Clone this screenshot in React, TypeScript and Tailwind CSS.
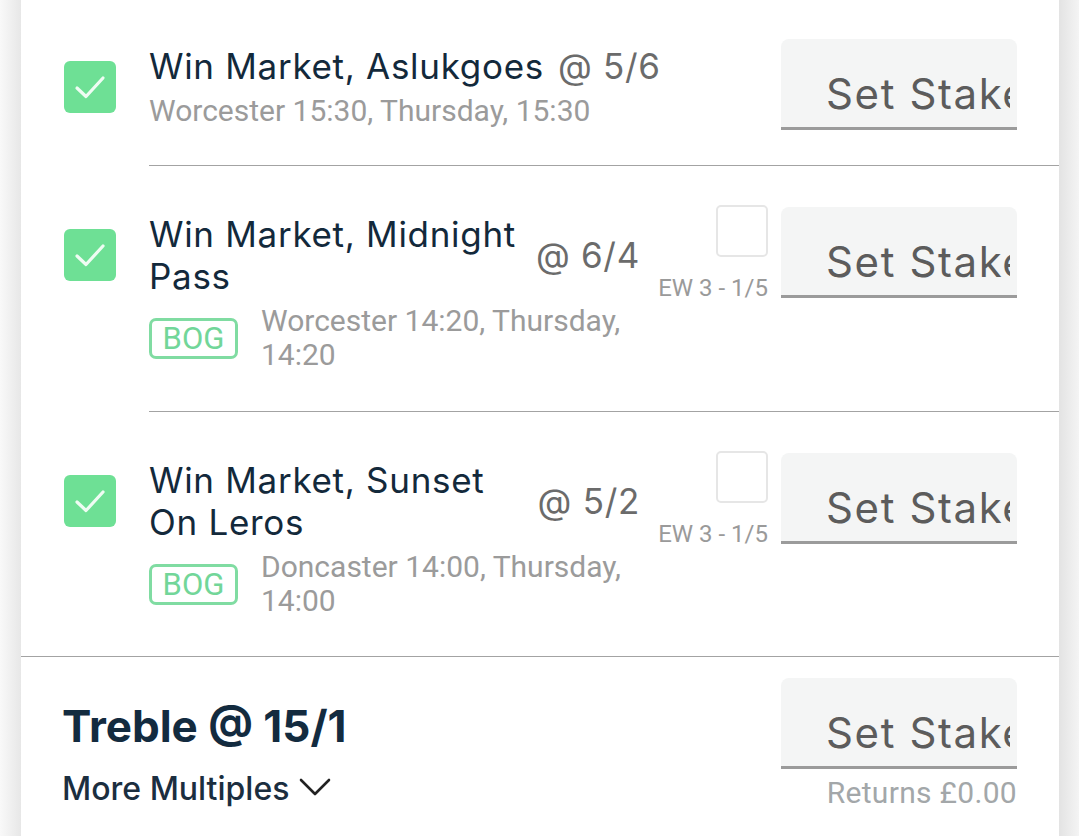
import React from "react";

const TITLE_FONT = "font-['Inter',sans-serif]";
const SUB_FONT = "font-['Roboto',sans-serif]";

function GreenCheck() {
  return (
    <div className="flex h-[52px] w-[52px] items-center justify-center rounded-[6px] bg-[#6ee095]">
      <svg width="36" height="36" viewBox="0 0 36 36" fill="none">
        <path d="M5 19 L14 27.5 L31 9" stroke="#effcf3" strokeWidth="3.2" strokeLinecap="round" strokeLinejoin="round" />
      </svg>
    </div>
  );
}

function SetStake() {
  return (
    <div className="h-[91px] w-[236px] shrink-0 rounded-t-[8px] border-b-[3px] border-[#9b9b9b] bg-[#f4f5f5] pl-[45px] pr-[7px] pt-[31px]">
      <div className={`overflow-hidden whitespace-nowrap text-[42px] leading-[48px] tracking-[1.6px] text-[#5c5c5c] ${TITLE_FONT}`}>Set Stake</div>
    </div>
  );
}

function EW() {
  return (
    <div className="ml-[15px] mt-[-2px] flex w-[113px] shrink-0 flex-col items-end">
      <div className="h-[52px] w-[52px] rounded-[5px] border-2 border-[#e6e6e6] bg-white" />
      <div className={`mt-[17px] whitespace-nowrap text-[24px] leading-[28px] text-[#9a9a9a] ${SUB_FONT}`}>EW 3 - 1/5</div>
    </div>
  );
}

type Row = {
  title: string;
  odds: string;
  sub: string;
  bog?: boolean;
  ew?: boolean;
};

function BetRow({ row, pt, pb, checkTop, last }: { row: Row; pt: string; pb: string; checkTop: string; last?: boolean }) {
  return (
    <div className={`flex pl-[43px] ${last ? "border-b border-[#a3a3a3]" : ""}`}>
      <div className={`shrink-0 ${checkTop}`}>
        <GreenCheck />
      </div>
      <div className={`ml-[33px] flex flex-1 items-start pr-[42px] ${pb} ${pt} ${last ? "" : "border-b border-[#a3a3a3]"}`}>
        <div className="flex min-w-0 flex-1 flex-col pb-[3px] pt-[6px]">
          <div className="flex items-center">
            <div className={`min-w-0 text-[35px] leading-[42px] tracking-[0.7px] text-[#13293b] ${TITLE_FONT}`}>{row.title}</div>
            <div className={`ml-[14px] shrink-0 whitespace-nowrap text-[35px] leading-[42px] tracking-[0.7px] text-[#6b6b6b] ${TITLE_FONT}`}>{row.odds}</div>
          </div>
          <div className="mt-[7px] flex items-center">
            {row.bog && (
              <div className={`mr-[23px] flex h-[41px] w-[89px] shrink-0 items-center justify-center rounded-[7px] border-[3px] border-[#80dca2] text-[31px] leading-none text-[#72d699] ${SUB_FONT}`}>
                BOG
              </div>
            )}
            <div className={`min-w-0 text-[30px] leading-[34px] text-[#9b9b9b] ${SUB_FONT}`}>{row.sub}</div>
          </div>
        </div>
        {row.ew && <EW />}
        <div className="ml-[13px]">
          <SetStake />
        </div>
      </div>
    </div>
  );
}

export default function App() {
  const rows: Row[] = [
    { title: "Win Market, Aslukgoes", odds: "@ 5/6", sub: "Worcester 15:30, Thursday, 15:30" },
    { title: "Win Market, Midnight Pass", odds: "@ 6/4", sub: "Worcester 14:20, Thursday, 14:20", bog: true, ew: true },
    { title: "Win Market, Sunset On Leros", odds: "@ 5/2", sub: "Doncaster 14:00, Thursday, 14:00", bog: true, ew: true },
  ];
  return (
    <div className="flex h-[836px] w-[1079px] overflow-hidden bg-white">
      <div className="w-[21px] shrink-0 bg-gradient-to-r from-[#f9f9f9] to-[#e7e7e7]" />
      <div className="flex flex-1 flex-col bg-white">
        <BetRow row={rows[0]} pt="pt-[39px]" pb="pb-[34px]" checkTop="mt-[61px]" />
        <BetRow row={rows[1]} pt="pt-[41px]" pb="pb-[36px]" checkTop="mt-[63px]" />
        <BetRow row={rows[2]} pt="pt-[41px]" pb="pb-[35px]" checkTop="mt-[63px]" last />
        <div className="flex items-start pl-[41px] pr-[42px] pt-[21px]">
          <div className="flex flex-1 flex-col pt-[23px]">
            <div className={`text-[44px] font-bold leading-[50px] text-[#132b3f] ${TITLE_FONT}`}>Treble @ 15/1</div>
            <div className="mt-[19px] flex items-center">
              <span className={`text-[32px] font-medium leading-[38px] text-[#1b2e3f] ${TITLE_FONT}`}>More Multiples</span>
              <svg className="ml-[10px] mt-[-4px]" width="32" height="20" viewBox="0 0 32 20" fill="none">
                <path d="M2 3 L16 17 L30 3" stroke="#222" strokeWidth="2.6" strokeLinecap="round" strokeLinejoin="round" />
              </svg>
            </div>
          </div>
          <div className="flex flex-col items-end">
            <SetStake />
            <div className={`mt-[7px] whitespace-nowrap text-[30px] leading-[34px] tracking-[0.3px] text-[#a3a7a9] ${SUB_FONT}`}>Returns £0.00</div>
          </div>
        </div>
      </div>
      <div className="w-[20px] shrink-0 bg-gradient-to-r from-[#e3e3e3] to-[#f4f4f4]" />
    </div>
  );
}
